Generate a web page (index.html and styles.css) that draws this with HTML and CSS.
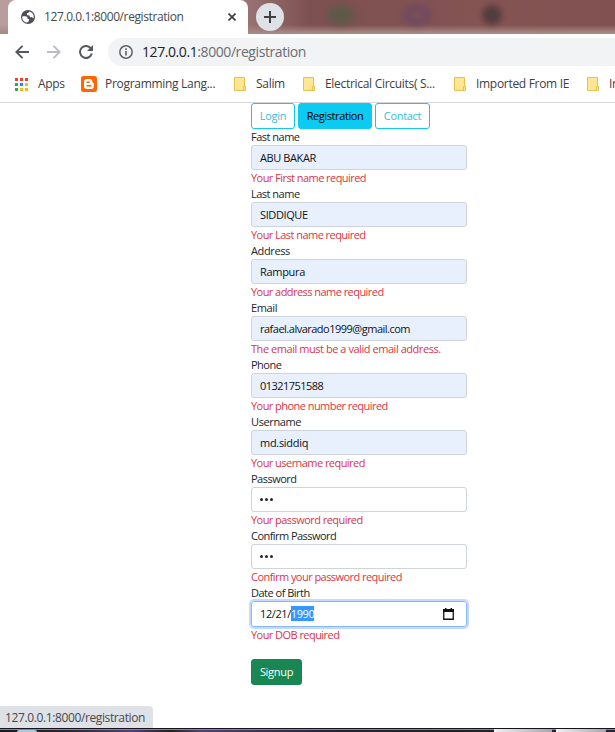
FILE: index.html
```html
<!DOCTYPE html>
<html lang="en">
<head>
<meta charset="utf-8">
<title>127.0.0.1:8000/registration</title>
<link rel="stylesheet" href="styles.css">
</head>
<body>
<div class="window">
  <header class="tabstrip">
    <div class="glow green"></div><div class="glow purple"></div><div class="glow dark"></div>
    <div class="tab">
      <svg class="globe" width="14" height="14" viewBox="0 0 14 14"><circle cx="7" cy="7" r="7" fill="#4d5156"/><path d="M1.3 6.2 4.8 6.3 6.6 7.3 6.3 8.7 8.2 9.3 7.7 11.2 5.8 12.7A6 6 0 0 1 1.3 6.2ZM8.3 1.4 7.5 2.7 6 3.3 6 5 8.4 5.4 9.2 7.2 11.2 7 11.8 8.3 12.7 8A6 6 0 0 0 8.3 1.4Z" fill="#fff"/></svg>
      <span class="tab-title">127.0.0.1:8000/registration</span>
      <svg class="close" width="8" height="8" viewBox="0 0 8 8"><path d="M.5.5l7 7M7.5.5l-7 7" stroke="#3c4043" stroke-width="1.7"/></svg>
    </div>
    <div class="newtab"><svg width="12" height="12" viewBox="0 0 12 12"><path d="M6 0v12M0 6h12" stroke="#3c4043" stroke-width="2"/></svg></div>
  </header>

  <div class="toolbar">
    <svg class="nav" width="14" height="14" viewBox="0 0 14 14"><path d="M14 7H1.5M7.5.8 1.3 7l6.2 6.2" fill="none" stroke="#55595e" stroke-width="1.9"/></svg>
    <svg class="nav" width="14" height="14" viewBox="0 0 14 14"><path d="M0 7h12.5M6.5.8 12.7 7l-6.2 6.2" fill="none" stroke="#bbbdc0" stroke-width="1.9"/></svg>
    <svg class="nav" width="14" height="14" viewBox="0 0 14 14"><path d="M12 3.6A6 6 0 1 0 12.8 8.6" fill="none" stroke="#55595e" stroke-width="2"/><path d="M14 0v6H8Z" fill="#55595e"/></svg>
    <div class="omnibox">
      <svg width="14" height="14" viewBox="0 0 14 14"><circle cx="7" cy="7" r="6.2" fill="none" stroke="#5f6368" stroke-width="1.5"/><path d="M7 6v4.5M7 3.3v1.6" stroke="#5f6368" stroke-width="1.6"/></svg>
      <span class="url"><b>127.0.0.1</b>:8000/registration</span>
    </div>
  </div>

  <nav class="bookmarks">
    <div class="bm apps"><svg width="13" height="13" viewBox="0 0 13 13"><path d="M0 0h3v3H0zM5 0h3v3H5zM10 0h3v3h-3z" fill="#ea4335"/><path d="M0 5h3v3H0zM0 10h3v3H0z" fill="#34a853"/><path d="M5 5h3v3H5z" fill="#1a8cff"/><path d="M10 5h3v3h-3zM5 10h3v3H5zM10 10h3v3h-3z" fill="#f9b80e"/></svg><span>Apps</span></div>
    <div class="bm blog"><svg width="16" height="16" viewBox="0 0 16 16"><rect width="16" height="16" rx="2.5" fill="#ff6600"/><path d="M6 3h2.5A3 3 0 0 1 11.5 6c0 .8.4 1 1.3 1v3.2A2.8 2.8 0 0 1 10 13H6a3 3 0 0 1-3-3V6a3 3 0 0 1 3-3Z" fill="#fff"/><path d="M6 6.3h2.2M6 9.8h4" stroke="#ff6600" stroke-width="1.4" stroke-linecap="round"/></svg><span>Programming Lang...</span></div>
    <div class="bm salim"><svg class="folder" width="12" height="14" viewBox="0 0 12 14"><path d="M.5.5h10v9h1v4H.5Z" fill="#ffe694" stroke="#e8c34b"/><path d="M9.5 13V9.5h2" fill="none" stroke="#e8c34b"/></svg><span>Salim</span></div>
    <div class="bm elec"><svg class="folder" width="12" height="14" viewBox="0 0 12 14"><path d="M.5.5h10v9h1v4H.5Z" fill="#ffe694" stroke="#e8c34b"/><path d="M9.5 13V9.5h2" fill="none" stroke="#e8c34b"/></svg><span>Electrical Circuits( S...</span></div>
    <div class="bm imp"><svg class="folder" width="12" height="14" viewBox="0 0 12 14"><path d="M.5.5h10v9h1v4H.5Z" fill="#ffe694" stroke="#e8c34b"/><path d="M9.5 13V9.5h2" fill="none" stroke="#e8c34b"/></svg><span>Imported From IE</span></div>
    <div class="bm last"><svg class="folder" width="12" height="14" viewBox="0 0 12 14"><path d="M.5.5h10v9h1v4H.5Z" fill="#ffe694" stroke="#e8c34b"/><path d="M9.5 13V9.5h2" fill="none" stroke="#e8c34b"/></svg><span>In</span></div>
  </nav>

  <main class="page">
    <div class="links">
      <a class="btn login">Login</a><a class="btn active">Registration</a><a class="btn contact">Contact</a>
    </div>
    <form class="form">
      <div class="label">Fast name</div><div class="input filled caps">ABU BAKAR</div><div class="error">Your First name required</div>
      <div class="label">Last name</div><div class="input filled caps">SIDDIQUE</div><div class="error">Your Last name required</div>
      <div class="label loose">Address</div><div class="input filled">Rampura</div><div class="error">Your address name required</div>
      <div class="label loose">Email</div><div class="input filled mail">rafael.alvarado1999@gmail.com</div><div class="error wide">The email must be a valid email address.</div>
      <div class="label">Phone</div><div class="input filled digits">01321751588</div><div class="error">Your phone number required</div>
      <div class="label loose">Username</div><div class="input filled">md.siddiq</div><div class="error">Your username required</div>
      <div class="label">Password</div><div class="input"><i class="dot"></i><i class="dot"></i><i class="dot"></i></div><div class="error">Your password required</div>
      <div class="label confirm">Confirm Password</div><div class="input"><i class="dot"></i><i class="dot"></i><i class="dot"></i></div><div class="error">Confirm your password required</div>
      <div class="label">Date of Birth</div>
      <div class="input date"><span>12/21/</span><span class="sel">1990</span>
        <svg class="cal" width="11" height="12" viewBox="0 0 11 12"><path d="M.75 2h9.5v9.25H.75Z" fill="none" stroke="#111" stroke-width="1.3"/><path d="M0 1h11v3H0ZM2 0h1.5v2H2ZM7.5 0H9v2H7.5Z" fill="#111"/></svg>
      </div>
      <div class="error">Your DOB required</div>
      <div class="btn signup">Signup</div>
    </form>
  </main>

  <div class="status">127.0.0.1:8000/registration</div>
  <footer class="taskbar"><div class="orb"></div><div class="task one"></div><div class="task two"></div></footer>
</div>
</body>
</html>
```
FILE: styles.css
```css
* { box-sizing: border-box; }
body { margin: 0; background: #fff; font-family: "Open Sans", "Noto Sans", sans-serif; color: #212529; overflow: hidden; }
svg { display: block; flex: none; }
.window { width: 615px; height: 732px; display: flex; flex-direction: column; position: relative; overflow: hidden; white-space: nowrap; }

.tabstrip { height: 34px; flex: none; display: flex; position: relative; overflow: hidden; padding-left: 8px; background: linear-gradient(rgba(170,140,136,0) 25px, #a98985 33px), linear-gradient(90deg, #b99d9c, #9c7777 240px, #7d5050 310px, #845453 480px, #805150); }
.glow { position: absolute; top: 5px; width: 28px; height: 20px; border-radius: 50%; filter: blur(3px); }
.green { left: 327px; background: #60594a; }
.purple { left: 403px; background: none; border: 6px solid #6c4863; }
.dark { left: 482px; width: 20px; background: #523c3d; }
.tab { position: relative; width: 240px; height: 34px; background: #fff; border-radius: 8px 8px 0 0; display: flex; align-items: center; padding-left: 13px; }
.tab-title { width: 155px; margin-left: 9px; padding-bottom: 1px; font-size: 12px; letter-spacing: -.4px; color: #45494d; }
.close { margin-left: 29px; }
.newtab { position: relative; width: 28px; height: 28px; margin: 3px 0 0 8px; border-radius: 50%; background: #dee1e6; display: flex; align-items: center; justify-content: center; }

.toolbar { height: 36px; flex: none; display: flex; align-items: center; padding-left: 15px; }
.nav { margin-right: 18px; }
.omnibox { flex: 1; height: 28px; margin-left: -3px; border-radius: 14px 0 0 14px; background: #f1f3f4; display: flex; align-items: center; padding-left: 11px; }
.url { margin-left: 9px; padding-bottom: 2px; font-size: 14px; letter-spacing: -.42px; color: #6a6e73; }
.url b { font-weight: 400; color: #202124; }

.bookmarks { height: 33px; flex: none; display: flex; position: relative; border-bottom: 1px solid #d5d7da; font-size: 12px; color: #3c4043; letter-spacing: -.3px; padding: 0 0 4px 15px; }
.bm { display: flex; align-items: center; flex: none; }
.bm span { padding-bottom: 1px; }
.apps { width: 66px; gap: 10px; }
.blog { width: 153px; gap: 8px; }
.salim { width: 69px; gap: 10px; }
.elec { width: 151px; gap: 10px; }
.imp { width: 133px; gap: 10px; }
.last { gap: 10px; }

.page { flex: 1; padding-left: 251px; font-size: 11px; letter-spacing: -.3px; }
.links { display: flex; gap: 3px; height: 26px; }
.btn { height: 26px; border: 1px solid #0dcaf0; border-radius: 3px; display: flex; align-items: center; justify-content: center; color: #35bddd; padding-bottom: 1px; }
.login { width: 44px; }
.active { width: 74px; background: #0dcaf0; color: #000; letter-spacing: -.4px; }
.contact { width: 55px; }
.form { width: 216px; margin: 0; }
.label, .error { height: 16px; line-height: 16px; }
.label { letter-spacing: -.5px; }
.loose { letter-spacing: -.55px; }
.confirm { letter-spacing: -.55px; }
.error { color: #dc3545; letter-spacing: -.55px; }
.wide { letter-spacing: -.45px; }
.input { height: 25px; border: 1px solid #ced4da; border-radius: 3px; padding-left: 8px; display: flex; align-items: center; color: #111; }
.filled { background: #e8f0fe; }
.caps { letter-spacing: -.4px; }
.mail { letter-spacing: -.5px; }
.digits { letter-spacing: -.53px; }
.label.loose { letter-spacing: -.38px; }
.dot { width: 3px; height: 3px; margin: 0 1.5px 0 .2px; border-radius: 50%; background: #212529; }
.date { height: 26px; border-color: #86b7fe; box-shadow: 0 0 0 2px #c2dbfe; letter-spacing: -.4px; }
.date span { margin-bottom: 1px; }
.sel { background: #3399ff; color: #fff; height: 15px; line-height: 15px; }
.cal { margin: 0 12px 0 auto; }
.signup { width: 51px; margin-top: 16px; background: #198754; border-color: #198754; color: #fff; }

.status { position: absolute; left: 0; bottom: 4px; width: 153px; height: 22px; padding-left: 5px; line-height: 23px; background: #dee1e6; border-radius: 0 4px 0 0; font-size: 12px; letter-spacing: -.38px; color: #45494d; }
.taskbar { height: 4px; flex: none; display: flex; position: relative; border-top: 1px solid #15131b; background: linear-gradient(#8a8890 1px, transparent 1px), linear-gradient(90deg, #19181e, #2a2737 70px, #55407a 130px, #222 170px, #554073 200px, #262238 330px, #20232a 450px, #282238); }
.orb { width: 20px; height: 2px; margin: 1px 0 0 17px; border-radius: 10px 10px 0 0; background: #a6c9dc; }
.task { height: 3px; background: linear-gradient(90deg, #f2f0f3, #aaa4b1); }
.one { width: 58px; margin-left: 457px; }
.two { width: 50px; margin-left: 4px; }
```
